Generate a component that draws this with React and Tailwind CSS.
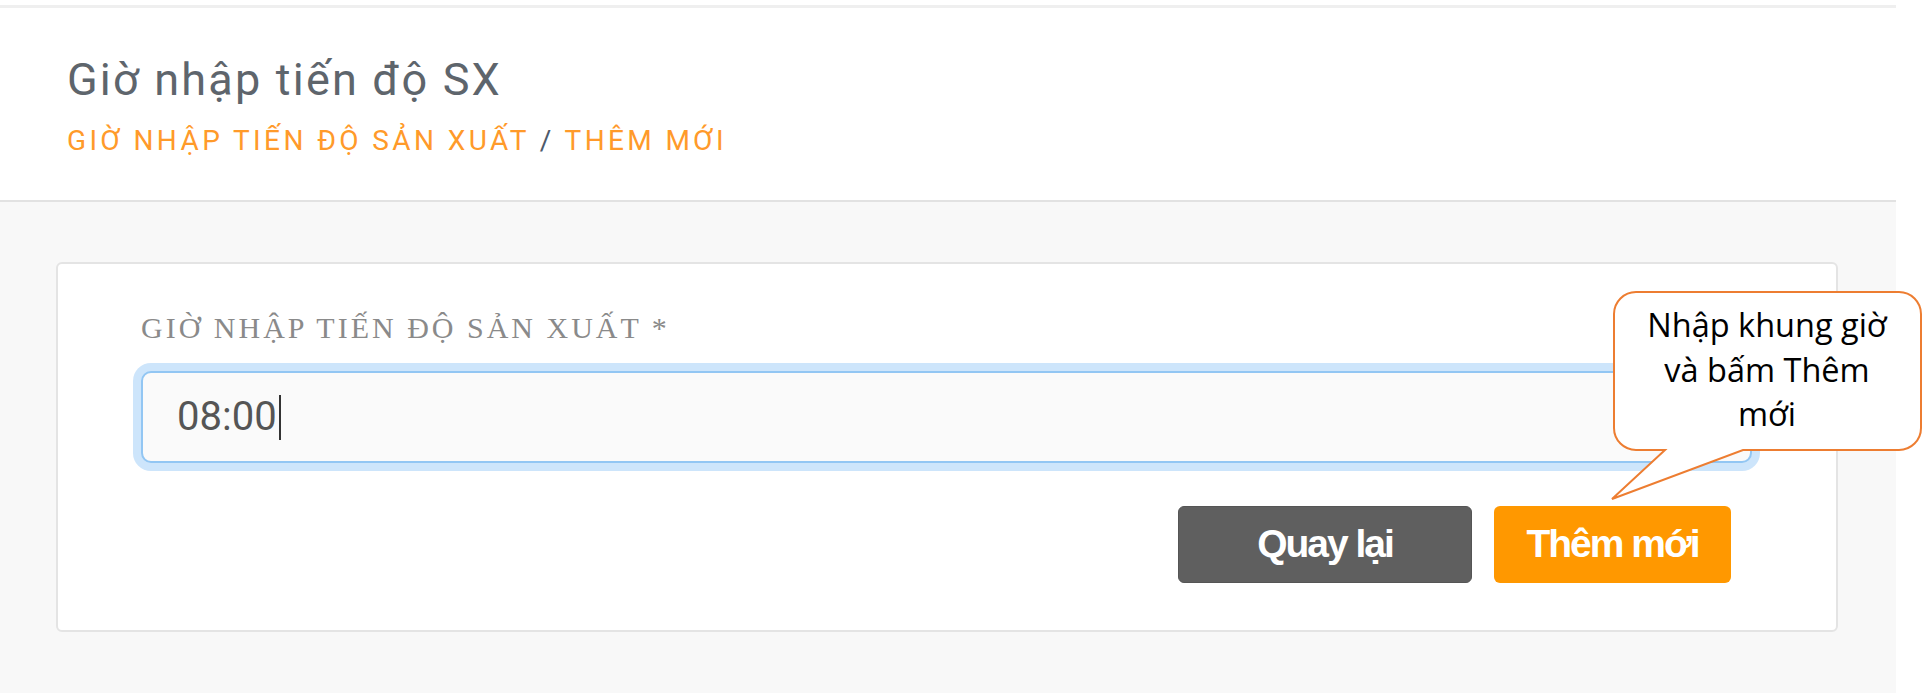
export default function App() {
  return (
    <div className="relative flex h-[693px] w-full overflow-hidden bg-white font-['Roboto',sans-serif]">
      <div className="flex w-[1896px] flex-col">
        <div className="h-[5px] bg-white" />
        <div className="h-[3px] bg-[#efefef]" />

        {/* page header */}
        <div className="h-[194px] border-b-2 border-[#e2e2e2] bg-white pl-[67px] pt-[49px]">
          <h1 className="text-[45px] leading-none tracking-[2.2px] text-[#5e656c]">Giờ nhập tiến độ SX</h1>
          <div className="mt-[25px] text-[28px] leading-none tracking-[3.4px] text-[#ff9a2a]">
            GIỜ NHẬP TIẾN ĐỘ SẢN XUẤT <span className="text-[#4d5a6b]">/</span> THÊM MỚI
          </div>
        </div>

        {/* content */}
        <div className="flex-1 bg-[#f8f8f8] pl-[56px] pr-[58px] pt-[60px]">
          <div className="rounded-[6px] border-2 border-[#e4e4e4] bg-white pb-[47px] pl-[83px] pr-[84px] pt-[49px]">
            <label className="block font-['Liberation_Serif',serif] text-[30px] leading-none tracking-[3px] text-[#8a8a8a]">
              GIỜ NHẬP TIẾN ĐỘ SẢN XUẤT *
            </label>
            <div className="mt-[28px] flex h-[92px] items-center rounded-[10px] border-2 border-[#92c6f3] bg-[#fafafa] pl-[34px] shadow-[0_0_0_8px_#cde5fb]">
              <span className="text-[40px] leading-none text-[#555555]">08:00</span>
              <span className="ml-[2px] inline-block h-[45px] w-[2px] bg-[#333333]" />
            </div>
            <div className="mr-[21px] mt-[43px] flex justify-end gap-[22px]">
              <button className="h-[77px] w-[294px] rounded-[6px] border border-[#555555] bg-[#5f5f5f] font-['Liberation_Sans',sans-serif] text-[39px] font-bold tracking-[-2px] text-white">
                Quay lại
              </button>
              <button className="h-[77px] w-[237px] rounded-[6px] bg-[#ff9800] font-['Liberation_Sans',sans-serif] text-[39px] font-bold tracking-[-2px] text-white">
                Thêm mới
              </button>
            </div>
          </div>
        </div>
      </div>

      {/* annotation callout */}
      <svg className="absolute left-[1600px] top-[285px]" width="323" height="222" viewBox="0 0 323 222">
        <path
          d="M36 7 H299 A22 22 0 0 1 321 29 V143 A22 22 0 0 1 299 165 H143 L12 214 L65 165 H36 A22 22 0 0 1 14 143 V29 A22 22 0 0 1 36 7 Z"
          fill="white"
          stroke="#ed7d31"
          strokeWidth="2"
        />
      </svg>
      <div className="absolute left-[1613px] top-[303px] w-[308px] text-center font-['Open_Sans',sans-serif] text-[32.5px] leading-[44.5px] text-black">
        Nhập khung giờ
        <br />
        và bấm Thêm
        <br />
        mới
      </div>
    </div>
  );
}
